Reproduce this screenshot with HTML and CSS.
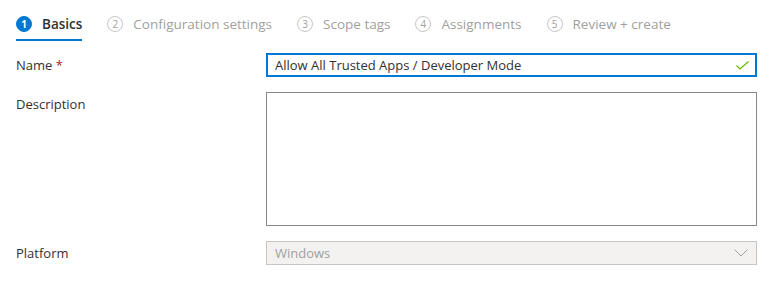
FILE: index.html
```html
<!DOCTYPE html>
<html lang="en">
<head>
  <meta charset="UTF-8">
  <title>Create profile - Basics</title>
  <link rel="stylesheet" href="styles.css">
</head>
<body>
  <nav class="steps">
    <div class="step active"><span class="num">1</span><span class="label">Basics</span></div>
    <div class="step"><span class="num">2</span><span class="label">Configuration settings</span></div>
    <div class="step"><span class="num">3</span><span class="label">Scope tags</span></div>
    <div class="step"><span class="num">4</span><span class="label">Assignments</span></div>
    <div class="step"><span class="num">5</span><span class="label">Review + create</span></div>
  </nav>

  <form class="form">
    <div class="row">
      <label class="field-label" for="name">Name <span class="req">*</span></label>
      <div class="input valid">
        <input id="name" type="text" value="Allow All Trusted Apps / Developer Mode">
        <svg class="check" width="13" height="9" viewBox="0 0 13 9"><path d="M0.5 4.5 L4 8 L12.5 0.5" fill="none" stroke="#6bb700" stroke-width="1.2"/></svg>
      </div>
    </div>
    <div class="row">
      <label class="field-label" for="desc">Description</label>
      <textarea id="desc" class="textarea"></textarea>
    </div>
    <div class="row">
      <label class="field-label">Platform</label>
      <div class="select disabled">
        <span>Windows</span>
        <svg class="chevron" width="14" height="8" viewBox="0 0 14 8"><path d="M0.5 0.5 L7 7 L13.5 0.5" fill="none" stroke="#a19f9d" stroke-width="1"/></svg>
      </div>
    </div>
  </form>
</body>
</html>
```

FILE: styles.css
```css
body {
  margin: 0;
  padding: 0 20px 0 16px;
  background: #fff;
  color: #323130;
  font-family: 'Open Sans', 'Segoe UI', sans-serif;
  font-size: 13px;
}
.steps {
  display: flex;
  gap: 25px;
  padding-top: 8px;
  margin-bottom: 12px;
}
.step {
  display: flex;
  align-items: center;
  gap: 10px;
  height: 31px;
  border-bottom: 2px solid transparent;
  color: #a19f9d;
  font-size: 13.5px;
}
.step .num {
  width: 16px;
  height: 16px;
  box-sizing: border-box;
  border: 1px solid #c8c6c4;
  border-radius: 50%;
  display: flex;
  align-items: center;
  justify-content: center;
  font-size: 10px;
  color: #a19f9d;
}
.step.active {
  border-bottom-color: #0078d4;
  color: #323130;
  font-weight: 600;
}
.step.active .num {
  background: #0078d4;
  border-color: #0078d4;
  color: #fff;
  font-weight: 700;
}
.row {
  display: flex;
  margin-bottom: 15px;
}
.field-label {
  width: 250px;
  flex-shrink: 0;
  line-height: 24px;
}
.req {
  color: #a4262c;
}
.input, .textarea, .select {
  flex: 1;
  box-sizing: border-box;
  font-family: inherit;
  font-size: 13px;
}
.input {
  display: flex;
  align-items: center;
  height: 24px;
  border: 2px solid #0078d4;
  padding: 0 5px 0 7px;
}
.input input {
  flex: 1;
  border: none;
  outline: none;
  padding: 0;
  font: inherit;
  color: #323130;
}
.check {
  margin-right: 1px;
}
.textarea {
  height: 134px;
  border: 1px solid #8a8886;
  resize: none;
  padding: 4px 8px;
}
.select {
  display: flex;
  align-items: center;
  justify-content: space-between;
  height: 24px;
  padding: 0 8px 0 8px;
  border: 1px solid #c8c6c4;
  background: #f3f2f1;
  color: #a19f9d;
}
```
